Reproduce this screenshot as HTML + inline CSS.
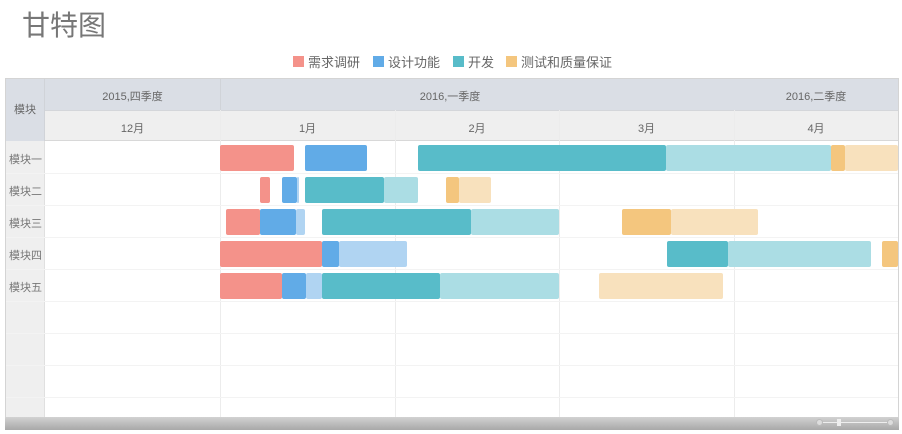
<!DOCTYPE html>
<html><head><meta charset="utf-8"><style>
*{margin:0;padding:0;box-sizing:border-box}
body{width:902px;height:434px;background:#fff;position:relative;overflow:hidden;font-family:"Liberation Sans","Noto Sans CJK SC",sans-serif;color:#666}
.a{position:absolute}
.t{left:22px;top:4px;font-size:28px;color:#777}
.lg{top:52px;font-size:13px;color:#666;display:flex;align-items:center}
.lg i{display:inline-block;width:11px;height:11px;margin-right:4px}
.box{left:5px;top:78px;width:894px;height:340px;border:1px solid #d4d4d4;border-bottom:none}
.h1{left:45px;top:79px;width:853px;height:31px;background:#dadee5}
.h2{left:45px;top:110px;width:853px;height:31px;background:#efefef;border-top:1px solid #d4d6da;border-bottom:1px solid #d8d8d8}
.lc{left:6px;top:79px;width:39px;height:338px;background:#efefef;border-right:1px solid #e0e0e0}
.lch{left:6px;top:79px;width:39px;height:62px;background:#dadee5;border-right:1px solid #d0d3d8;font-size:11px;text-align:center;line-height:62px}
.ht{font-size:11px;color:#666;text-align:center}
.vl{width:1px;background:#ececec}
.hl{height:1px;left:6px;width:892px;background:#f3f3f3}
.rl{left:9px;font-size:11px;color:#777}
.b{height:26px;border-radius:2px}
.r{background:#f4928a}.bl{background:#61abe7}.lb{background:#b0d4f2}.tl{background:#58bcc9}.lt{background:#abdde4}.o{background:#f4c67e}.lo{background:#f8e1bd}
.sb{left:5px;top:417px;width:894px;height:13px;background:linear-gradient(#d2d2d2,#a8a8a8)}
</style></head><body>
<div class="a t">甘特图</div>
<div class="a lg" style="left:293px"><i style="background:#f4928a"></i>需求调研</div>
<div class="a lg" style="left:373px"><i style="background:#61abe7"></i>设计功能</div>
<div class="a lg" style="left:453px"><i style="background:#58bcc9"></i>开发</div>
<div class="a lg" style="left:506px"><i style="background:#f4c67e"></i>测试和质量保证</div>

<div class="a box"></div>
<div class="a h1"></div>
<div class="a h2"></div>
<div class="a lc"></div>
<div class="a lch">模块</div>
<div class="a vl" style="left:220px;top:79px;height:31px;background:#d0d3d8"></div>
<div class="a ht" style="left:45px;top:88px;width:175px">2015,四季度</div>
<div class="a ht" style="left:220px;top:88px;width:460px">2016,一季度</div>
<div class="a ht" style="left:734px;top:88px;width:164px">2016,二季度</div>
<div class="a ht" style="left:45px;top:120px;width:175px">12月</div>
<div class="a ht" style="left:220px;top:120px;width:175px">1月</div>
<div class="a ht" style="left:395px;top:120px;width:164px">2月</div>
<div class="a ht" style="left:559px;top:120px;width:175px">3月</div>
<div class="a ht" style="left:734px;top:120px;width:164px">4月</div>
<div class="a vl" style="left:220px;top:110px;height:307px"></div>
<div class="a vl" style="left:395px;top:110px;height:307px"></div>
<div class="a vl" style="left:559px;top:110px;height:307px"></div>
<div class="a vl" style="left:734px;top:110px;height:307px"></div>
<div class="a hl" style="top:173px"></div>
<div class="a hl" style="top:205px"></div>
<div class="a hl" style="top:237px"></div>
<div class="a hl" style="top:269px"></div>
<div class="a hl" style="top:301px"></div>
<div class="a hl" style="top:333px"></div>
<div class="a hl" style="top:365px"></div>
<div class="a hl" style="top:397px"></div>
<div class="a rl" style="top:151px">模块一</div>
<div class="a rl" style="top:183px">模块二</div>
<div class="a rl" style="top:215px">模块三</div>
<div class="a rl" style="top:247px">模块四</div>
<div class="a rl" style="top:279px">模块五</div>

<div class="a b r" style="top:145px;left:220px;width:74px"></div>
<div class="a b bl" style="top:145px;left:305px;width:62px"></div>
<div class="a b tl" style="top:145px;left:418px;width:248px"></div>
<div class="a b lt" style="top:145px;left:666px;width:165px"></div>
<div class="a b o" style="top:145px;left:831px;width:14px"></div>
<div class="a b lo" style="top:145px;left:845px;width:53px"></div>

<div class="a b r" style="top:177px;left:260px;width:10px"></div>
<div class="a b bl" style="top:177px;left:282px;width:15px"></div>
<div class="a b lb" style="top:177px;left:297px;width:2px"></div>
<div class="a b tl" style="top:177px;left:305px;width:79px"></div>
<div class="a b lt" style="top:177px;left:384px;width:34px"></div>
<div class="a b o" style="top:177px;left:446px;width:13px"></div>
<div class="a b lo" style="top:177px;left:459px;width:32px"></div>

<div class="a b r" style="top:209px;left:226px;width:34px"></div>
<div class="a b bl" style="top:209px;left:260px;width:36px"></div>
<div class="a b lb" style="top:209px;left:296px;width:9px"></div>
<div class="a b tl" style="top:209px;left:322px;width:149px"></div>
<div class="a b lt" style="top:209px;left:471px;width:88px"></div>
<div class="a b o" style="top:209px;left:622px;width:49px"></div>
<div class="a b lo" style="top:209px;left:671px;width:87px"></div>

<div class="a b r" style="top:241px;left:220px;width:102px"></div>
<div class="a b bl" style="top:241px;left:322px;width:17px"></div>
<div class="a b lb" style="top:241px;left:339px;width:68px"></div>
<div class="a b tl" style="top:241px;left:667px;width:61px"></div>
<div class="a b lt" style="top:241px;left:728px;width:143px"></div>
<div class="a b o" style="top:241px;left:882px;width:16px"></div>

<div class="a b r" style="top:273px;left:220px;width:62px"></div>
<div class="a b bl" style="top:273px;left:282px;width:24px"></div>
<div class="a b lb" style="top:273px;left:306px;width:16px"></div>
<div class="a b tl" style="top:273px;left:322px;width:118px"></div>
<div class="a b lt" style="top:273px;left:440px;width:119px"></div>
<div class="a b lo" style="top:273px;left:599px;width:124px"></div>

<div class="a sb"></div>
<div class="a" style="left:820px;top:422px;width:72px;height:1px;background:#eee"></div>
<div class="a" style="left:816px;top:419px;width:7px;height:7px;border-radius:50%;background:#ddd;border:1px solid #bbb"></div>
<div class="a" style="left:837px;top:419px;width:4px;height:7px;background:#eee"></div>
<div class="a" style="left:887px;top:419px;width:7px;height:7px;border-radius:50%;background:#ddd;border:1px solid #bbb"></div>
</body></html>
